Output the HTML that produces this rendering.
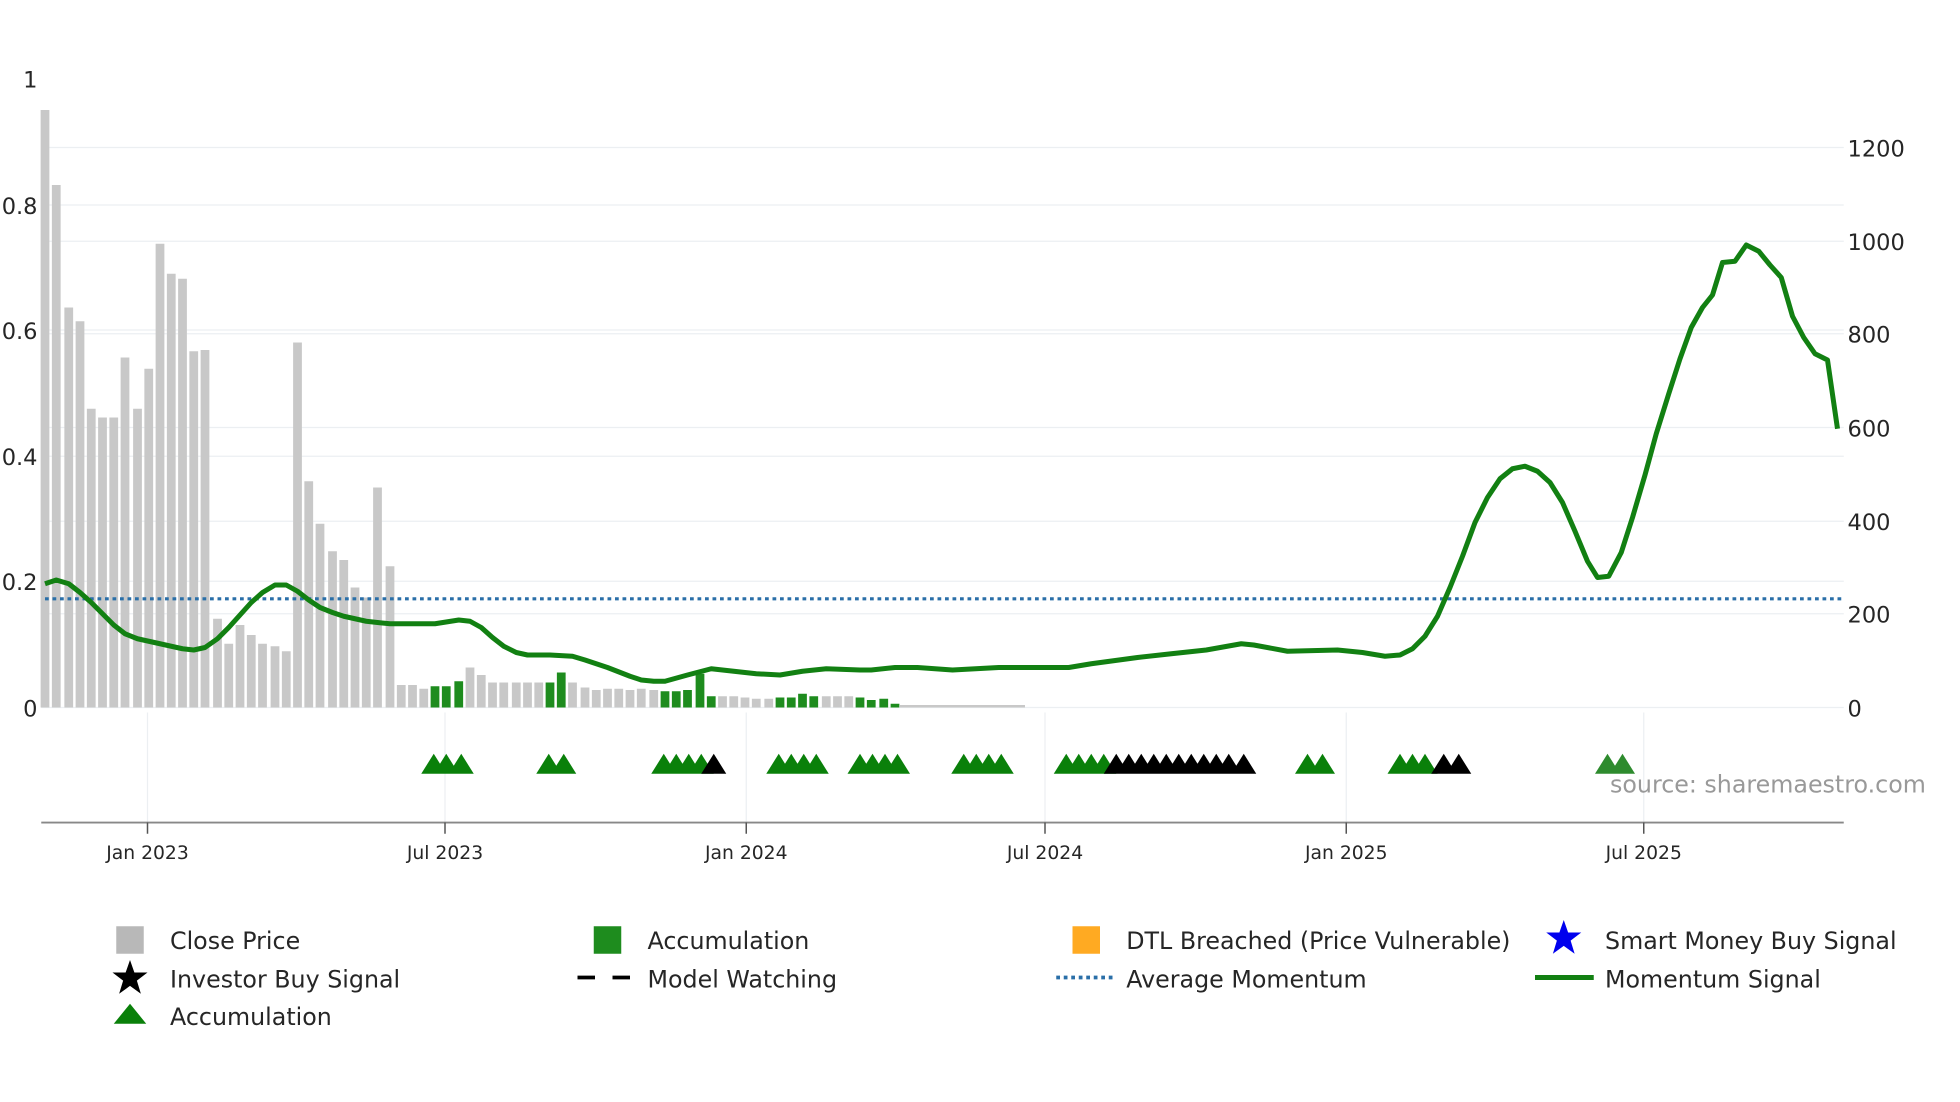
<!DOCTYPE html>
<html><head><meta charset="utf-8"><style>
html,body{margin:0;padding:0;background:#fff;width:1960px;height:1102px;overflow:hidden}
svg{display:block}
text{font-family:"DejaVu Sans","Liberation Sans",sans-serif;fill:#262626}
</style></head><body>
<svg width="1960" height="1102" viewBox="0 0 1568 881.6" xmlns="http://www.w3.org/2000/svg">
<g stroke="#eceff2" stroke-width="1">
<line x1="33" y1="118" x2="1475" y2="118"/><line x1="33" y1="193" x2="1475" y2="193"/>
<line x1="33" y1="267" x2="1475" y2="267"/><line x1="33" y1="342" x2="1475" y2="342"/>
<line x1="33" y1="417" x2="1475" y2="417"/><line x1="33" y1="491" x2="1475" y2="491"/>
<line x1="33" y1="164" x2="1475" y2="164"/><line x1="33" y1="264" x2="1475" y2="264"/>
<line x1="33" y1="365" x2="1475" y2="365"/><line x1="33" y1="465" x2="1475" y2="465"/>
<line x1="33" y1="566" x2="1475" y2="566"/>
<line x1="118" y1="570" x2="118" y2="658"/><line x1="356" y1="570" x2="356" y2="658"/>
<line x1="597" y1="570" x2="597" y2="658"/><line x1="836" y1="570" x2="836" y2="658"/>
<line x1="1077" y1="570" x2="1077" y2="658"/><line x1="1315" y1="570" x2="1315" y2="658"/>
</g>
<g fill="#c8c8c8">
<rect x="32.5" y="88" width="7" height="478"/><rect x="41.5" y="148" width="7" height="418"/>
<rect x="51.5" y="246" width="7" height="320"/><rect x="60.5" y="257" width="7" height="309"/>
<rect x="69.5" y="327" width="7" height="239"/><rect x="78.5" y="334" width="7" height="232"/>
<rect x="87.5" y="334" width="7" height="232"/><rect x="96.5" y="286" width="7" height="280"/>
<rect x="106.5" y="327" width="7" height="239"/><rect x="115.5" y="295" width="7" height="271"/>
<rect x="124.5" y="195" width="7" height="371"/><rect x="133.5" y="219" width="7" height="347"/>
<rect x="142.5" y="223" width="7" height="343"/><rect x="151.5" y="281" width="7" height="285"/>
<rect x="160.5" y="280" width="7" height="286"/><rect x="170.5" y="495" width="7" height="71"/>
<rect x="179.5" y="515" width="7" height="51"/><rect x="188.5" y="500" width="7" height="66"/>
<rect x="197.5" y="508" width="7" height="58"/><rect x="206.5" y="515" width="7" height="51"/>
<rect x="216.5" y="517" width="7" height="49"/><rect x="225.5" y="521" width="7" height="45"/>
<rect x="234.5" y="274" width="7" height="292"/><rect x="243.5" y="385" width="7" height="181"/>
<rect x="252.5" y="419" width="7" height="147"/><rect x="262.5" y="441" width="7" height="125"/>
<rect x="271.5" y="448" width="7" height="118"/><rect x="280.5" y="470" width="7" height="96"/>
<rect x="289.5" y="478" width="7" height="88"/><rect x="298.5" y="390" width="7" height="176"/>
<rect x="308.5" y="453" width="7" height="113"/><rect x="317.5" y="548" width="7" height="18"/>
<rect x="326.5" y="548" width="7" height="18"/><rect x="335.5" y="551" width="7" height="15"/>
<rect x="372.5" y="534" width="7" height="32"/><rect x="381.5" y="540" width="7" height="26"/>
<rect x="390.5" y="546" width="7" height="20"/><rect x="399.5" y="546" width="7" height="20"/>
<rect x="409.5" y="546" width="7" height="20"/><rect x="418.5" y="546" width="7" height="20"/>
<rect x="427.5" y="546" width="7" height="20"/><rect x="454.5" y="546" width="7" height="20"/>
<rect x="464.5" y="550" width="7" height="16"/><rect x="473.5" y="552" width="7" height="14"/>
<rect x="482.5" y="551" width="7" height="15"/><rect x="491.5" y="551" width="7" height="15"/>
<rect x="500.5" y="552" width="7" height="14"/><rect x="509.5" y="551" width="7" height="15"/>
<rect x="519.5" y="552" width="7" height="14"/><rect x="574.5" y="557" width="7" height="9"/>
<rect x="583.5" y="557" width="7" height="9"/><rect x="592.5" y="558" width="7" height="8"/>
<rect x="601.5" y="559" width="7" height="7"/><rect x="611.5" y="559" width="7" height="7"/>
<rect x="657.5" y="557" width="7" height="9"/><rect x="666.5" y="557" width="7" height="9"/>
<rect x="675.5" y="557" width="7" height="9"/>
<rect x="720" y="564" width="100" height="2"/>
</g>
<g fill="#1e8c1e">
<rect x="344.5" y="549" width="7" height="17"/><rect x="353.5" y="549" width="7" height="17"/>
<rect x="363.5" y="545" width="7" height="21"/><rect x="436.5" y="546" width="7" height="20"/>
<rect x="445.5" y="538" width="7" height="28"/><rect x="528.5" y="553" width="7" height="13"/>
<rect x="537.5" y="553" width="7" height="13"/><rect x="546.5" y="552" width="7" height="14"/>
<rect x="556.5" y="539" width="7" height="27"/><rect x="565.5" y="557" width="7" height="9"/>
<rect x="620.5" y="558" width="7" height="8"/><rect x="629.5" y="558" width="7" height="8"/>
<rect x="638.5" y="555" width="7" height="11"/><rect x="647.5" y="557" width="7" height="9"/>
<rect x="684.5" y="558" width="7" height="8"/><rect x="693.5" y="560" width="7" height="6"/>
<rect x="703.5" y="559" width="7" height="7"/><rect x="712.5" y="563" width="7" height="3"/>
</g>
<line x1="36" y1="479" x2="1475" y2="479" stroke="#2a6fa8" stroke-width="2.5" stroke-dasharray="3,3"/>
<polyline fill="none" stroke="#128012" stroke-width="4" stroke-linejoin="round" points="36,467 45,464 55,467 64,474 73,482 82,491 91,500 100,507 110,511 119,513 128,515 137,517 146,519 155,520 164,518 174,511 183,502 192,492 201,482 210,474 220,468 229,468 238,473 247,480 256,486 266,490 275,493 284,495 293,497 302,498 312,499 330,499 348,499 367,496 376,497 385,502 394,510 403,517 413,522 422,524 440,524 458,525 468,528 486,534 504,541 513,544 523,545 532,545 550,540 569,535 587,537 605,539 624,540 642,537 661,535 688,536 697,536 716,534 734,534 762,536 799,534 855,534 873,531 910,526 937,523 965,520 993,515 1003,516 1030,521 1070,520 1090,522 1108,525 1120,524 1130,519 1140,509 1150,493 1160,470 1170,445 1180,418 1190,398 1200,383 1210,375 1220,373 1230,377 1240,386 1250,402 1260,425 1270,449 1278,462 1287,461 1297,442 1306,414 1316,380 1325,347 1335,315 1344,287 1353,262 1362,246 1370,236 1378,210 1388,209 1397,196 1407,201 1416,212 1425,222 1434,253 1443,270 1452,283 1462,288 1470,343"/>
<g>
<g fill="#0a800a">
<path d="M337,619 l10,-16 l10,16z M347,619 l10,-16 l10,16z M359,619 l10,-16 l10,16z"/>
<path d="M429,619 l10,-16 l10,16z M441,619 l10,-16 l10,16z"/>
<path d="M521,619 l10,-16 l10,16z M531,619 l10,-16 l10,16z M541,619 l10,-16 l10,16z M551,619 l10,-16 l10,16z"/>
<path d="M613,619 l10,-16 l10,16z M623,619 l10,-16 l10,16z M633,619 l10,-16 l10,16z M643,619 l10,-16 l10,16z"/>
<path d="M678,619 l10,-16 l10,16z M688,619 l10,-16 l10,16z M698,619 l10,-16 l10,16z M708,619 l10,-16 l10,16z"/>
<path d="M761,619 l10,-16 l10,16z M771,619 l10,-16 l10,16z M781,619 l10,-16 l10,16z M791,619 l10,-16 l10,16z"/>
<path d="M843,619 l10,-16 l10,16z M853,619 l10,-16 l10,16z M863,619 l10,-16 l10,16z M873,619 l10,-16 l10,16z"/>
<path d="M1036,619 l10,-16 l10,16z M1048,619 l10,-16 l10,16z"/>
<path d="M1110,619 l10,-16 l10,16z M1120,619 l10,-16 l10,16z M1130,619 l10,-16 l10,16z"/>
</g>
<path fill="#000" d="M561,619 l10,-16 l10,16z M883,619 l10,-16 l10,16z M893,619 l10,-16 l10,16z M903,619 l10,-16 l10,16z M913,619 l10,-16 l10,16z M923,619 l10,-16 l10,16z M933,619 l10,-16 l10,16z M943,619 l10,-16 l10,16z M953,619 l10,-16 l10,16z M963,619 l10,-16 l10,16z M973,619 l10,-16 l10,16z M985,619 l10,-16 l10,16z M1145,619 l10,-16 l10,16z M1157,619 l10,-16 l10,16z"/>
<path fill="#2e8b2e" d="M1276,619 l10,-16 l10,16z M1288,619 l10,-16 l10,16z"/>
</g>
<text x="1288" y="634" font-size="19" style="fill:#999">source: sharemaestro.com</text>
<line x1="33" y1="658" x2="1475" y2="658" stroke="#888" stroke-width="1.5"/>
<g stroke="#555" stroke-width="1.2">
<line x1="118" y1="658" x2="118" y2="667"/><line x1="356" y1="658" x2="356" y2="667"/>
<line x1="597" y1="658" x2="597" y2="667"/><line x1="836" y1="658" x2="836" y2="667"/>
<line x1="1077" y1="658" x2="1077" y2="667"/><line x1="1315" y1="658" x2="1315" y2="667"/>
</g>
<g font-size="15" text-anchor="middle">
<text x="118" y="687">Jan 2023</text><text x="356" y="687">Jul 2023</text>
<text x="597" y="687">Jan 2024</text><text x="836" y="687">Jul 2024</text>
<text x="1077" y="687">Jan 2025</text><text x="1315" y="687">Jul 2025</text>
</g>
<g font-size="18" text-anchor="end">
<text x="30" y="70">1</text><text x="30" y="171">0.8</text><text x="30" y="271">0.6</text>
<text x="30" y="372">0.4</text><text x="30" y="472">0.2</text><text x="30" y="573">0</text>
</g>
<g font-size="18">
<text x="1478" y="125">1200</text><text x="1478" y="200">1000</text><text x="1478" y="274">800</text>
<text x="1478" y="349">600</text><text x="1478" y="424">400</text><text x="1478" y="498">200</text>
<text x="1478" y="573">0</text>
</g>
<g font-size="19">
<rect x="93" y="741" width="22" height="22" fill="#b8b8b8"/><text x="136" y="759">Close Price</text>
<path d="M104,768 l3.5,10 h10.5 l-8.5,6.5 l3.2,10.5 l-8.7,-6.3 l-8.7,6.3 l3.2,-10.5 l-8.5,-6.5 h10.5z" fill="#000"/><text x="136" y="790">Investor Buy Signal</text>
<path d="M91,819 l13,-16 l13,16z" fill="#0a800a"/><text x="136" y="820">Accumulation</text>
<rect x="475" y="741" width="22" height="22" fill="#1e8c1e"/><text x="518" y="759">Accumulation</text>
<path d="M462,782 h14 M490,782 h14" stroke="#000" stroke-width="3"/><text x="518" y="790">Model Watching</text>
<rect x="858" y="741" width="22" height="22" fill="#ffaa22"/><text x="901" y="759">DTL Breached (Price Vulnerable)</text>
<line x1="845" y1="782" x2="890" y2="782" stroke="#2a6fa8" stroke-width="3" stroke-dasharray="3,3"/><text x="901" y="790">Average Momentum</text>
<path d="M1251,736 l3.5,10 h10.5 l-8.5,6.5 l3.2,10.5 l-8.7,-6.3 l-8.7,6.3 l3.2,-10.5 l-8.5,-6.5 h10.5z" fill="#0000ee"/><text x="1284" y="759">Smart Money Buy Signal</text>
<line x1="1228" y1="782" x2="1275" y2="782" stroke="#128012" stroke-width="4"/><text x="1284" y="790">Momentum Signal</text>
</g>
</svg>
</body></html>
